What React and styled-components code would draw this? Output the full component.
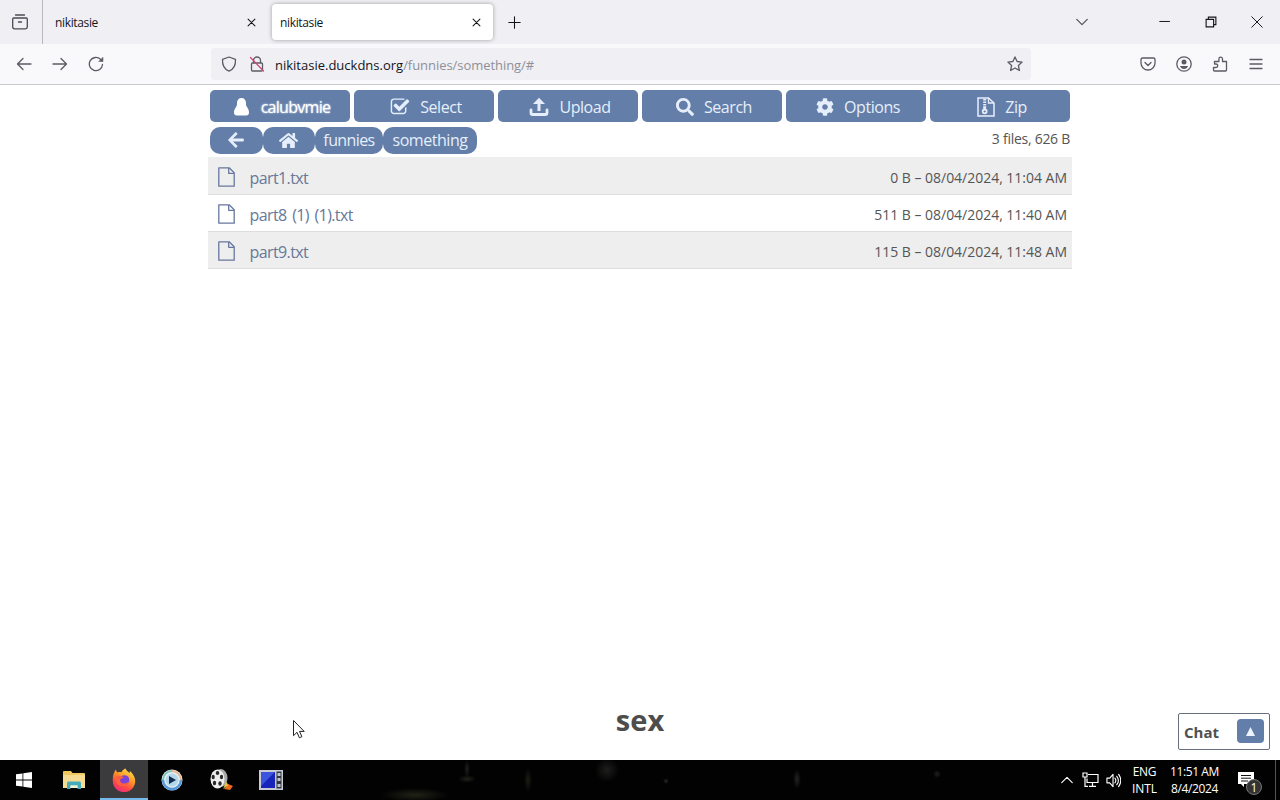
import React from "react";
import styled, { createGlobalStyle, css } from "styled-components";
import { FaArrowLeft, FaCog, FaHome, FaSearch } from "react-icons/fa";

const GlobalStyle = createGlobalStyle`
  * {
    box-sizing: border-box;
  }

  body {
    margin: 0;
    overflow: hidden;
    background: #fff;
    font-family: "Open Sans", "Noto Sans", sans-serif;
  }

  svg {
    display: block;
    flex: none;
  }
`;

const Desktop = styled.div`
  position: relative;
  display: flex;
  flex-direction: column;
  width: 1280px;
  height: 800px;
  overflow: hidden;
`;

const Text = styled.span`
  white-space: pre;
  letter-spacing: ${(props) => props.$spacing || 0}px;
`;

/* browser window */

const TabBar = styled.div`
  display: flex;
  align-items: center;
  height: 44px;
  background: #f0f0f4;
  color: #15141a;
`;

const FirefoxView = styled.div`
  display: flex;
  align-items: center;
  justify-content: center;
  width: 43px;
  height: 44px;
  padding-right: 2px;
  border-right: 1px solid #b9b9c0;
  color: #4a4a55;
`;

const Tab = styled.div`
  display: flex;
  align-items: center;
  justify-content: space-between;
  width: ${(props) => (props.$active ? 221 : 225)}px;
  height: 36px;
  margin-left: ${(props) => (props.$active ? 4 : 0)}px;
  padding: 1px 11px 0 ${(props) => (props.$active ? 8 : 12)}px;
  border-radius: 4px;
  font-size: 12px;
  line-height: 17px;
  ${(props) =>
    props.$active &&
    css`
      background: #fff;
      box-shadow: 0 0 4px rgba(0, 0, 0, 0.35);
    `}
`;

const NewTab = styled.div`
  margin-left: 15px;
`;

const WindowControls = styled.div`
  display: flex;
  align-items: center;
  margin-left: auto;
`;

const ControlSlot = styled.div`
  display: flex;
  justify-content: center;
  width: ${(props) => props.$width || 46}px;
`;

const NavBar = styled.div`
  display: flex;
  align-items: center;
  height: 41px;
  background: #f9f9fb;
  border-bottom: 1px solid #c9c9cd;
  color: #5b5b66;
`;

const NavButtons = styled.div`
  display: flex;
  gap: 20px;
  width: 211px;
  padding-left: 16px;
`;

const UrlBar = styled.div`
  display: flex;
  align-items: center;
  width: 820px;
  height: 32px;
  padding: 0 8px 0 10px;
  border-radius: 4px;
  background: #f0f0f4;
`;

const Url = styled.div`
  flex: 1;
  margin-left: 10px;
  padding-top: 1px;
  font-size: 13px;
  color: #15141a;
`;

const UrlPath = styled(Text)`
  color: #8f8f98;
`;

const LockSlot = styled.div`
  margin-left: 12px;
`;

const NavTools = styled.div`
  display: flex;
  gap: 20px;
  margin-left: auto;
  padding-right: 16px;
`;

/* file listing */

const Page = styled.main`
  flex: 1;
  width: 864px;
  margin: 0 auto;
  padding-top: 5px;
`;

const Menu = styled.div`
  display: grid;
  grid-template-columns: repeat(6, 140px);
  gap: 4px;
  padding: 0 2px;
`;

const MenuButton = styled.button`
  display: flex;
  align-items: center;
  justify-content: center;
  gap: ${(props) => (props.$logged ? 11 : 10)}px;
  height: 32px;
  padding: 2px 0 0 ${(props) => (props.$logged ? 3 : 4)}px;
  border: none;
  border-radius: 5px;
  background: #627ea9;
  color: #e6eefb;
  font-family: inherit;
  font-size: 16px;
  ${(props) =>
    props.$logged &&
    css`
      color: #fff;
      text-shadow: 0 0 2px #fff;
    `}
`;

const PathBar = styled.div`
  display: flex;
  height: 35px;
  padding: 5px 2px 0;
`;

const Crumb = styled.div`
  display: flex;
  align-items: center;
  justify-content: center;
  width: ${(props) => props.$width}px;
  height: 27px;
  border-radius: 10px;
  background: #627ea9;
  color: #e6eefb;
  font-size: 16px;
  line-height: 25px;
  padding-bottom: 1px;
`;

const Totals = styled.div`
  margin-left: auto;
  padding-top: 2px;
  color: #555;
  font-size: 14px;
  line-height: 20px;
`;

const FileRow = styled.div`
  display: flex;
  align-items: center;
  height: ${(props) => props.$height}px;
  padding: 2px 5px 0 9.5px;
  border-bottom: 1px solid #ddd;
  background: ${(props) => (props.$shaded ? "#eee" : "#fff")};
`;

const FileName = styled.div`
  flex: 1;
  margin-left: 15px;
  padding-top: 2px;
  color: #667999;
  font-size: 16px;
  word-spacing: 2px;
`;

const FileInfo = styled.div`
  padding-top: 2px;
  color: #555;
  font-size: 14px;
  line-height: 20px;
`;

const Footer = styled.h1`
  margin: 0 0 20px;
  color: #4d4d4d;
  font-size: 29px;
  font-weight: 700;
  line-height: 40px;
  text-align: center;
`;

const Chat = styled.div`
  position: absolute;
  top: 713px;
  left: 1178px;
  display: flex;
  align-items: center;
  justify-content: space-between;
  width: 92px;
  height: 37px;
  padding: 0 5px;
  border: 1px solid #68707e;
  border-radius: 2px;
  background: #fff;
  color: #505050;
  font-size: 15px;
  font-weight: 700;
`;

const ChatToggle = styled.div`
  display: flex;
  align-items: center;
  justify-content: center;
  width: 27px;
  height: 24px;
  margin-bottom: 1px;
  border-radius: 4px;
  background: #627ea9;
`;

const Pointer = styled.svg`
  position: absolute;
  top: 719px;
  left: 292px;
`;

/* taskbar */

const Taskbar = styled.div`
  display: flex;
  height: 40px;
  background:
    radial-gradient(circle at 607px 10px, #1d1f1c 0, transparent 12px),
    radial-gradient(ellipse 34px 7px at 415px 35px, #202218 0, transparent 100%),
    radial-gradient(ellipse 3px 9px at 467px 9px, #1f211c 0, transparent 100%),
    radial-gradient(ellipse 9px 4px at 467px 19px, #20221a 0, transparent 100%),
    radial-gradient(ellipse 4px 12px at 528px 20px, #1b1d14 0, transparent 100%),
    radial-gradient(ellipse 4px 10px at 797px 19px, #20231f 0, transparent 100%),
    radial-gradient(circle at 937px 14px, #20221f 0, transparent 4px),
    radial-gradient(circle at 666px 21px, #272924 0, transparent 3px),
    #020202;
  color: #fff;
`;

const TaskSlot = styled.div`
  display: flex;
  align-items: center;
  justify-content: center;
  width: ${(props) => props.$width || 49}px;
  padding-right: 1px;
  ${(props) =>
    props.$active &&
    css`
      background: #3b3b3d;
      border-bottom: 2px solid #76b9ed;
      padding-top: 2px;
    `}
`;

const Tray = styled.div`
  display: flex;
  align-items: center;
  margin-left: auto;
  font-size: 12px;
  line-height: 17px;
`;

const TrayText = styled.div`
  display: flex;
  flex-direction: column;
  align-items: center;
  width: ${(props) => props.$width}px;
`;

const TraySlot = styled.div`
  display: flex;
  justify-content: center;
  width: ${(props) => props.$width}px;
  padding-top: ${(props) => props.$drop || 0}px;
`;

const ShowDesktop = styled.div`
  width: 5px;
  height: 40px;
  border-left: 1px solid #555;
`;

const Line = ({ size = 16, width = 1.3, children, ...rest }) => (
  <svg
    width={size}
    height={size}
    viewBox="0 0 16 16"
    fill="none"
    stroke="currentColor"
    strokeWidth={width}
    strokeLinecap="round"
    strokeLinejoin="round"
    {...rest}
  >
    {children}
  </svg>
);

const CloseIcon = () => (
  <Line size={11} width={1.5}>
    <path d="M3 3l10 10M13 3L3 13" />
  </Line>
);

const UserIcon = () => (
  <svg width="17" height="18" viewBox="0 0 17 18" fill="currentColor">
    <path d="M8.500 0C5.700 0 4 2 4 5c0 1.700 0 2.500-.8 3.700C1.900 10.500 1 12 1 14.500 1 16.500 2 17.500 3.700 17.500h9.600c1.700 0 2.700-1 2.700-3 0-2.500-.9-4-2.200-5.800C13 7.500 13 6.700 13 5c0-3-1.700-5-4.500-5z" />
  </svg>
);

const CheckIcon = () => (
  <svg width="20" height="20" viewBox="0 0 1792 1792" fill="currentColor">
    <path d="M1472 930v318q0 119-84.500 203.500t-203.500 84.500h-832q-119 0-203.500-84.500t-84.500-203.500v-832q0-119 84.500-203.500t203.500-84.500h832q63 0 117 25 15 7 18 23 3 17-9 29l-49 49q-10 10-23 10-3 0-9-2-23-6-45-6h-832q-66 0-113 47t-47 113v832q0 66 47 113t113 47h832q66 0 113-47t47-113v-254q0-13 9-22l64-64q10-10 23-10 6 0 12 3 20 8 20 29zm231-489l-814 814q-24 24-57 24t-57-24l-430-430q-24-24-24-57t24-57l110-110q24-24 57-24t57 24l263 263 647-647q24-24 57-24t57 24l110 110q24 24 24 57t-24 57z" />
  </svg>
);

const UploadIcon = () => (
  <svg width="20" height="20" viewBox="0 0 20 20" fill="none" stroke="currentColor">
    <path d="M10 14V4" strokeWidth="3" />
    <path d="M10 0.800l6 6.200H4z" fill="currentColor" stroke="none" />
    <path
      d="M2 13v2.700q0 1.800 1.800 1.800h12.400q1.800 0 1.800-1.800V13"
      strokeWidth="2.800"
      strokeLinecap="round"
    />
  </svg>
);

const ZipIcon = () => (
  <svg width="18" height="20" viewBox="0 0 18 20" fill="none" stroke="currentColor">
    <path d="M1 1h10.500L17 6v13H1z" strokeWidth="1.500" />
    <path d="M11.500 1v5H17" strokeWidth="1.300" />
    <path d="M7.700 2v9" strokeWidth="3" strokeDasharray="1.500 1" />
    <path d="M7.700 9.500v4" strokeWidth="2.500" />
    <circle cx="7.700" cy="14.300" r="2" strokeWidth="1.700" />
  </svg>
);

const FileIcon = () => (
  <svg
    width="17"
    height="20"
    viewBox="0 0 17 20"
    fill="none"
    stroke="#68779d"
    strokeWidth="1.300"
    strokeLinejoin="round"
  >
    <path d="M.8.8h10.400L16.200 5.800v13.400H.8z" />
    <path d="M10.700 1v5.300h5.300" />
  </svg>
);

const WindowsIcon = () => (
  <svg width="16" height="16" viewBox="0 0 16 16" fill="#fff">
    <path d="M0 2.300l6.500-.9v6.100H0zM7.300 1.300L16 0v7.500H7.300zM0 8.400h6.500v6.200L0 13.700zM7.300 8.400H16V16l-8.700-1.300z" />
  </svg>
);

const FolderIcon = () => (
  <svg width="22" height="18" viewBox="0 0 22 18">
    <path d="M0 1q0-1 1-1h7l1.500 2H21q1 0 1 1v14H0z" fill="#efc85f" />
    <path d="M0 4h22v13H0z" fill="#f6db92" />
    <path d="M4 18v-6q0-1.500 1.500-1.500h11q1.500 0 1.500 1.500v6h-3.500v-3.500h-7V18z" fill="#45adb9" />
    <path d="M7.500 14.500h7V17h-7z" fill="#eef3df" />
  </svg>
);

const FirefoxIcon = () => (
  <svg width="24" height="24" viewBox="0 0 24 24">
    <defs>
      <linearGradient id="fox" x1="0.800" y1="0" x2="0.250" y2="1">
        <stop offset="0" stopColor="#ffe34d" />
        <stop offset="0.400" stopColor="#ff9826" />
        <stop offset="0.700" stopColor="#ff4a45" />
        <stop offset="1" stopColor="#e72b80" />
      </linearGradient>
    </defs>
    <path
      d="M2.500 4c.5-1.500 1-2 1.500-2.500.2 1.500.8 2.500 1.700 3C7 4 8.500 4 9.500 4.300 10 2.500 12 1 13.500.5c.5 2 2.500 3 4 4.500.3-.7.300-1.300.200-2 2.700 2 5.500 5.800 5.500 10A11.200 11.200 0 0 1 .8 13C.7 9 1 6.500 2.500 4z"
      fill="url(#fox)"
    />
    <circle cx="12.500" cy="12" r="4.800" fill="#7843d6" />
    <path d="M4 8c3-1.500 6 0 8 1.500-1.500 1-3.300 1-3.800 2.300-.6 2 1 4 4.300 3.700 2-.2 3-1 4-2-1 5-7 6-10.500 3C3.500 14 3 11 4 8z" fill="#ff603d" />
  </svg>
);

const PlayerIcon = () => (
  <svg width="22" height="22" viewBox="0 0 22 22">
    <circle cx="11" cy="11" r="10.500" fill="#e4eff5" />
    <path d="M11 2a9 9 0 0 0-9 9" stroke="#79c5bd" strokeWidth="2" fill="none" />
    <path d="M11 2a9 9 0 0 1 9 9" stroke="#e9b58a" strokeWidth="2" fill="none" />
    <path d="M2 11a9 9 0 0 0 18 0" stroke="#559bdc" strokeWidth="2.500" fill="none" />
    <circle cx="11" cy="11" r="6.500" fill="#b5d7ea" />
    <path d="M8 7l7 4-7 4z" fill="#102c53" />
  </svg>
);

const ReelIcon = () => (
  <svg width="24" height="22" viewBox="0 0 24 22">
    <ellipse cx="11" cy="9" rx="6.500" ry="9" fill="#aaa" />
    <ellipse cx="7.500" cy="10" rx="7" ry="9.500" fill="#eee" />
    <g fill="#282828">
      <ellipse cx="7.500" cy="4" rx="1.800" ry="2" />
      <ellipse cx="3.200" cy="8" rx="1.600" ry="2.200" />
      <ellipse cx="11.500" cy="8" rx="1.600" ry="2.200" />
      <ellipse cx="4.500" cy="14" rx="1.700" ry="2.300" />
      <ellipse cx="10" cy="14.500" rx="1.700" ry="2.300" />
    </g>
    <path d="M13 20l3-7 3 3z" fill="#68b944" />
    <path d="M14 20l4-5 5 2-3 4z" fill="#ee6a25" />
    <path d="M16 12l2 5-4 1z" fill="#f2bd42" />
  </svg>
);

const ScreenIcon = () => (
  <svg width="24" height="20" viewBox="0 0 24 20">
    <path d="M0 0h24v20H0z" fill="#c8cbd4" />
    <path d="M2 2h14v16H2z" fill="#1723b9" />
    <path d="M2 2h14L2 16z" fill="#3c55dc" />
    <path d="M17.500 1.500h5v17h-5z" fill="#30343d" />
    <path d="M18.500 3h3v3h-3zM18.500 8h3v3h-3zM18.500 14h3v3h-3z" fill="#bdc4ce" />
  </svg>
);

const NetworkIcon = () => (
  <svg width="17" height="16" viewBox="0 0 17 16" fill="none" stroke="#fff" strokeWidth="1.200">
    <path d="M6 2.500h10v8H5V6.500M10.500 10.500V14M7 14.400h7M1 1h4v4H1zM3 5v9.400h3" />
  </svg>
);

const NotificationIcon = () => (
  <svg width="26" height="24" viewBox="0 0 26 24">
    <path d="M1 1h16v12H7v3l-3-3H1z" fill="#fff" />
    <path d="M4 4.500h10M4 7.200h10M4 10h7" stroke="#111" strokeWidth="1" />
    <circle cx="17" cy="16" r="7.500" fill="#333" stroke="#777" />
    <text x="17" y="20.500" fill="#fff" fontSize="12" textAnchor="middle">
      1
    </text>
  </svg>
);

const files = [
  { name: "part1.txt", info: "0 B – 08/04/2024, 11:04 AM", height: 38 },
  { name: "part8 (1) (1).txt", info: "511 B – 08/04/2024, 11:40 AM", height: 37 },
  { name: "part9.txt", info: "115 B – 08/04/2024, 11:48 AM", height: 37 },
];

const menu = [
  { label: "Select", icon: <CheckIcon /> },
  { label: "Upload", icon: <UploadIcon /> },
  { label: "Search", icon: <FaSearch size={18} /> },
  { label: "Options", icon: <FaCog size={18} /> },
  { label: "Zip", icon: <ZipIcon /> },
];

function Browser() {
  return (
    <>
      <TabBar>
        <FirefoxView>
          <Line>
            <path d="M3.500 1h9M1.700 4h12.600q1 0 1 1v8q0 1.800-1.800 1.800h-11Q.7 14.800.7 13V5q0-1 1-1zM6.500 8h3" />
          </Line>
        </FirefoxView>
        <Tab>
          <Text $spacing={-0.35}>nikitasie</Text>
          <CloseIcon />
        </Tab>
        <Tab $active>
          <Text $spacing={-0.35}>nikitasie</Text>
          <CloseIcon />
        </Tab>
        <NewTab>
          <Line size={13}>
            <path d="M8 1v14M1 8h14" />
          </Line>
        </NewTab>
        <WindowControls>
          <ControlSlot $width={120}>
            <Line size={14} stroke="#5b5b66" width={1.6}>
              <path d="M2 5l6 6 6-6" />
            </Line>
          </ControlSlot>
          <ControlSlot>
            <Line size={12}>
              <path d="M1 7.300h13" />
            </Line>
          </ControlSlot>
          <ControlSlot>
            <Line size={12} width={1.5} strokeLinejoin="miter">
              <path d="M1.500 4.500h10v10h-10zM4.500 4.500v-3h10v10h-3" />
            </Line>
          </ControlSlot>
          <ControlSlot>
            <Line size={12}>
              <path d="M1 1l14 14M15 1L1 15" />
            </Line>
          </ControlSlot>
        </WindowControls>
      </TabBar>
      <NavBar>
        <NavButtons>
          <Line>
            <path d="M15 8H1.500M7 2.500L1.500 8 7 13.500" />
          </Line>
          <Line>
            <path d="M1 8h13.500M9 2.500L14.500 8 9 13.500" />
          </Line>
          <Line>
            <path d="M14.500 8.500A6.600 6.600 0 1 1 12.500 3.300l1.500 1.500" />
            <path d="M15 1.500v4h-4z" fill="currentColor" strokeWidth=".5" />
          </Line>
        </NavButtons>
        <UrlBar>
          <Line>
            <path d="M8 1l6.500 2.300c.3 5.500-1.800 10-6.500 11.900C3.300 13.300 1.200 8.800 1.500 3.300z" />
          </Line>
          <LockSlot>
            <Line>
              <path d="M4.500 7V4.500a3.500 3.500 0 0 1 7 0V7M3.500 7h9q1 0 1 1v6q0 1-1 1h-9q-1 0-1-1V8q0-1 1-1z" />
              <path d="M1.500 1.500l13 13.500" stroke="#c84a72" />
            </Line>
          </LockSlot>
          <Url>
            <Text>nikitasie.duckdns.org</Text>
            <UrlPath $spacing={-0.05}>/funnies/something/#</UrlPath>
          </Url>
          <Line>
            <path d="M8 .9l2.100 4.600 5 .6-3.700 3.400 1 5L8 12l-4.400 2.500 1-5L.9 6.100l5-.6z" />
          </Line>
        </UrlBar>
        <NavTools>
          <Line>
            <path d="M2.500 2h11q1.500 0 1.500 1.500V7a7 7 0 0 1-14 0V3.500Q1 2 2.500 2zM5 6.500l3 3 3-3" />
          </Line>
          <Line>
            <circle cx="8" cy="8" r="7.200" />
            <circle cx="8" cy="6" r="2.500" fill="currentColor" stroke="none" />
            <path d="M4 10h8q-1 3-4 3t-4-3z" fill="currentColor" stroke="none" />
          </Line>
          <Line>
            <path d="M2.500 15h11q1 0 1-1V5.500h-4V3a1.800 1.800 0 0 0-3.600 0v2.500H2.500V8H4a1.700 1.700 0 0 1 0 3.500H1.500V14q0 1 1 1z" />
          </Line>
          <Line>
            <path d="M2 3.500h12M2 8h12M2 12.500h12" />
          </Line>
        </NavTools>
      </NavBar>
    </>
  );
}

function FileList() {
  return (
    <Page>
      <Menu>
        <MenuButton $logged>
          <UserIcon />
          <Text $spacing={-0.7}>calubvmie</Text>
        </MenuButton>
        {menu.map((item) => (
          <MenuButton key={item.label}>
            {item.icon}
            <Text $spacing={-0.45}>{item.label}</Text>
          </MenuButton>
        ))}
      </Menu>
      <PathBar>
        <Crumb $width={52.5}>
          <FaArrowLeft size={18} />
        </Crumb>
        <Crumb $width={52.5}>
          <FaHome size={19} />
        </Crumb>
        <Crumb $width={68}>
          <Text $spacing={-0.6}>funnies</Text>
        </Crumb>
        <Crumb $width={94}>
          <Text $spacing={-0.45}>something</Text>
        </Crumb>
        <Totals>
          <Text $spacing={-0.27}>3 files, 626 B</Text>
        </Totals>
      </PathBar>
      {files.map((file, index) => (
        <FileRow key={file.name} $height={file.height} $shaded={index % 2 === 0}>
          <FileIcon />
          <FileName>
            <Text $spacing={-0.6}>{file.name}</Text>
          </FileName>
          <FileInfo>
            <Text $spacing={-0.02}>{file.info}</Text>
          </FileInfo>
        </FileRow>
      ))}
    </Page>
  );
}

function WindowsTaskbar() {
  return (
    <Taskbar>
      <TaskSlot>
        <WindowsIcon />
      </TaskSlot>
      <TaskSlot $width={51}>
        <FolderIcon />
      </TaskSlot>
      <TaskSlot $width={48} $active>
        <FirefoxIcon />
      </TaskSlot>
      <TaskSlot>
        <PlayerIcon />
      </TaskSlot>
      <TaskSlot $width={50}>
        <ReelIcon />
      </TaskSlot>
      <TaskSlot>
        <ScreenIcon />
      </TaskSlot>
      <Tray>
        <TraySlot $width={24}>
          <Line size={14}>
            <path d="M2 11l6-6 6 6" />
          </Line>
        </TraySlot>
        <TraySlot $width={23}>
          <NetworkIcon />
        </TraySlot>
        <TraySlot $width={23}>
          <Line size={15} width={1.2}>
            <path d="M1 5.500h3l3.500-4v13l-3.500-4H1zM9.500 5.500q2 2.500 0 5M11.500 3.500q3.500 4.500 0 9M13.500 1.500q4.500 6.500 0 13" />
          </Line>
        </TraySlot>
        <TrayText $width={39}>
          <Text $spacing={-0.3}>ENG</Text>
          <Text $spacing={-0.1}>INTL</Text>
        </TrayText>
        <TrayText $width={61}>
          <Text $spacing={-0.4}>11:51 AM</Text>
          <Text $spacing={-0.4}>8/4/2024</Text>
        </TrayText>
        <TraySlot $width={50} $drop={5}>
          <NotificationIcon />
        </TraySlot>
        <ShowDesktop />
      </Tray>
    </Taskbar>
  );
}

export default function App() {
  return (
    <Desktop>
      <GlobalStyle />
      <Browser />
      <FileList />
      <Footer>
        <Text>sex</Text>
      </Footer>
      <Chat>
        <Text>Chat</Text>
        <ChatToggle>
          <svg width="9" height="9" viewBox="0 0 9 9" fill="#edf4ff">
            <path d="M4.500 0L9 9H0z" />
          </svg>
        </ChatToggle>
      </Chat>
      <WindowsTaskbar />
      <Pointer width="13" height="20" viewBox="0 0 13 20">
        <path
          d="M1.500 1.500v15.200l3.500-3.400 2.400 5.500 2.500-1.100-2.400-5.300h4.700z"
          fill="#fff"
          stroke="#222"
        />
      </Pointer>
    </Desktop>
  );
}
